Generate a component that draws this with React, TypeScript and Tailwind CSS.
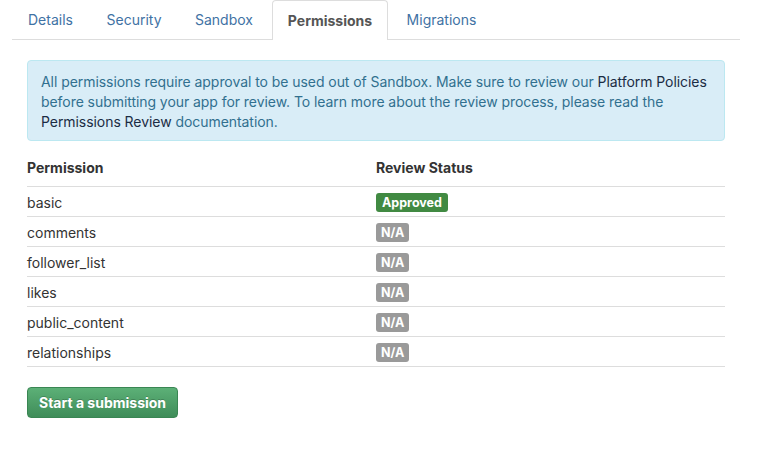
const TABS = [
  { label: "Details", w: "w-[75px]" },
  { label: "Security", w: "w-[84px]" },
  { label: "Sandbox", w: "w-[88px]" },
  { label: "Permissions", w: "w-[116px]", active: true },
  { label: "Migrations", w: "w-[99px]" },
];

const PERMISSIONS = [
  { name: "basic", approved: true },
  { name: "comments" },
  { name: "follower_list" },
  { name: "likes" },
  { name: "public_content" },
  { name: "relationships" },
];

export default function App() {
  return (
    <div className="w-[764px] h-[464px] bg-white pl-[12px] pr-[24px] text-[14px] text-[#333] font-['Inter','Liberation_Sans',sans-serif]">
      {/* Tabs */}
      <div className="flex h-[40px] gap-[4px] border-b border-[#ddd] pl-[1px]">
        {TABS.map((t) =>
          t.active ? (
            <div
              key={t.label}
              className={`${t.w} h-[40px] -mb-px flex items-center justify-center rounded-t-[4px] border border-b-0 border-[#ddd] bg-white font-bold text-[#555]`}
            >
              {t.label}
            </div>
          ) : (
            <div
              key={t.label}
              className={`${t.w} h-[39px] flex items-center justify-center text-[#3f72a4]`}
            >
              {t.label}
            </div>
          )
        )}
      </div>

      <div className="px-[15px]">
        {/* Info alert */}
        <div className="mt-[20px] rounded-[4px] border border-[#bce8f1] bg-[#d9edf7] pl-[13px] pr-[10px] pt-[11px] pb-[8px] leading-[20px] tracking-[-0.06px] text-[#31708f]">
          All permissions require approval to be used out of Sandbox. Make sure to review our{" "}
          <span className="text-[#1b2c44]">Platform Policies</span>
          <br />
          before submitting your app for review. To learn more about the review process, please read the
          <br />
          <span className="text-[#1b2c44]">Permissions Review</span> documentation.
        </div>

        {/* Permissions table */}
        <div className="mt-[9px]">
          <div className="grid grid-cols-2 pt-[8px] pb-[8px] leading-[20px] font-bold border-b border-[#ddd]">
            <div>Permission</div>
            <div>Review Status</div>
          </div>
          {PERMISSIONS.map((p) => (
            <div
              key={p.name}
              className="grid grid-cols-2 h-[30px] items-center border-b border-[#ddd] pt-[2px] leading-[20px]"
            >
              <div>{p.name}</div>
              <div className="flex">
                {p.approved ? (
                  <span className="flex h-[19px] items-center rounded-[3px] bg-[#418a42] px-[6px] text-[12.5px] font-bold text-white">
                    Approved
                  </span>
                ) : (
                  <span className="flex h-[19px] items-center rounded-[3px] bg-[#9a9a9a] px-[5px] text-[12.5px] font-bold text-white">
                    N/A
                  </span>
                )}
              </div>
            </div>
          ))}
        </div>

        <button className="mt-[20px] h-[31px] rounded-[4px] border border-[#3a8653] bg-gradient-to-b from-[#5cb077] to-[#3f8d59] px-[11px] font-bold text-white [text-shadow:0_-1px_0_rgba(0,0,0,0.2)]">
          Start a submission
        </button>
      </div>
    </div>
  );
}
